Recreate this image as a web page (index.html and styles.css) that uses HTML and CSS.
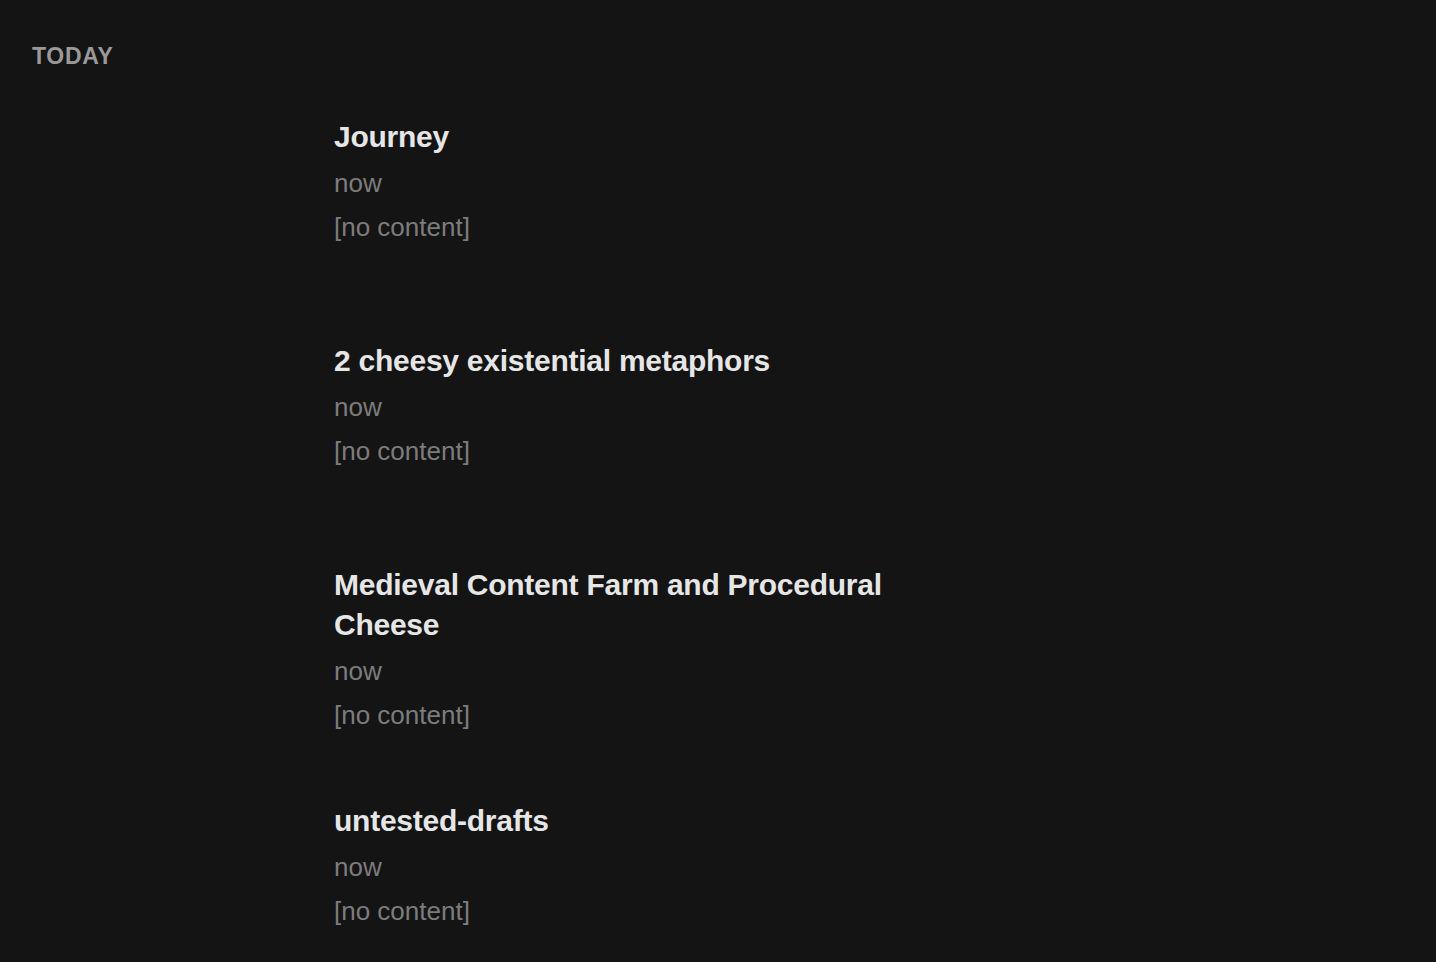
FILE: index.html
```html
<!DOCTYPE html>
<html lang="en">
<head>
<meta charset="utf-8">
<title>Today</title>
<link rel="stylesheet" href="styles.css">
</head>
<body>
<div class="page">
  <h2 class="section-label">TODAY</h2>
  <ul class="notes">
    <li class="note">
      <h3 class="note-title">Journey</h3>
      <div class="note-time">now</div>
      <div class="note-preview">[no content]</div>
    </li>
    <li class="note">
      <h3 class="note-title">2 cheesy existential metaphors</h3>
      <div class="note-time">now</div>
      <div class="note-preview">[no content]</div>
    </li>
    <li class="note">
      <h3 class="note-title">Medieval Content Farm and Procedural Cheese</h3>
      <div class="note-time">now</div>
      <div class="note-preview">[no content]</div>
    </li>
    <li class="note">
      <h3 class="note-title">untested-drafts</h3>
      <div class="note-time">now</div>
      <div class="note-preview">[no content]</div>
    </li>
  </ul>
</div>
</body>
</html>
```

FILE: styles.css
```css
html, body {
  margin: 0;
  padding: 0;
  background: #141414;
  height: 100%;
  overflow: hidden;
}

body {
  font-family: "Liberation Sans", Arial, Helvetica, sans-serif;
}

.page {
  padding: 42px 32px 0 32px;
}

.section-label {
  margin: 0;
  font-size: 23px;
  line-height: 28px;
  font-weight: 700;
  color: #9a9a9a;
  letter-spacing: 0.7px;
}

.notes {
  list-style: none;
  margin: 47px auto 0;
  padding: 0;
  width: 768px;
  display: flex;
  flex-direction: column;
  gap: 64px;
}

.note {
  min-height: 160px;
}

.note-title {
  margin: 0 0 4px 0;
  max-width: 600px;
  font-size: 30px;
  line-height: 40px;
  font-weight: 700;
  letter-spacing: -0.25px;
  color: #e6e6e6;
}

.note-time,
.note-preview {
  font-size: 26px;
  line-height: 44px;
  color: #7c7c7c;
}
```
